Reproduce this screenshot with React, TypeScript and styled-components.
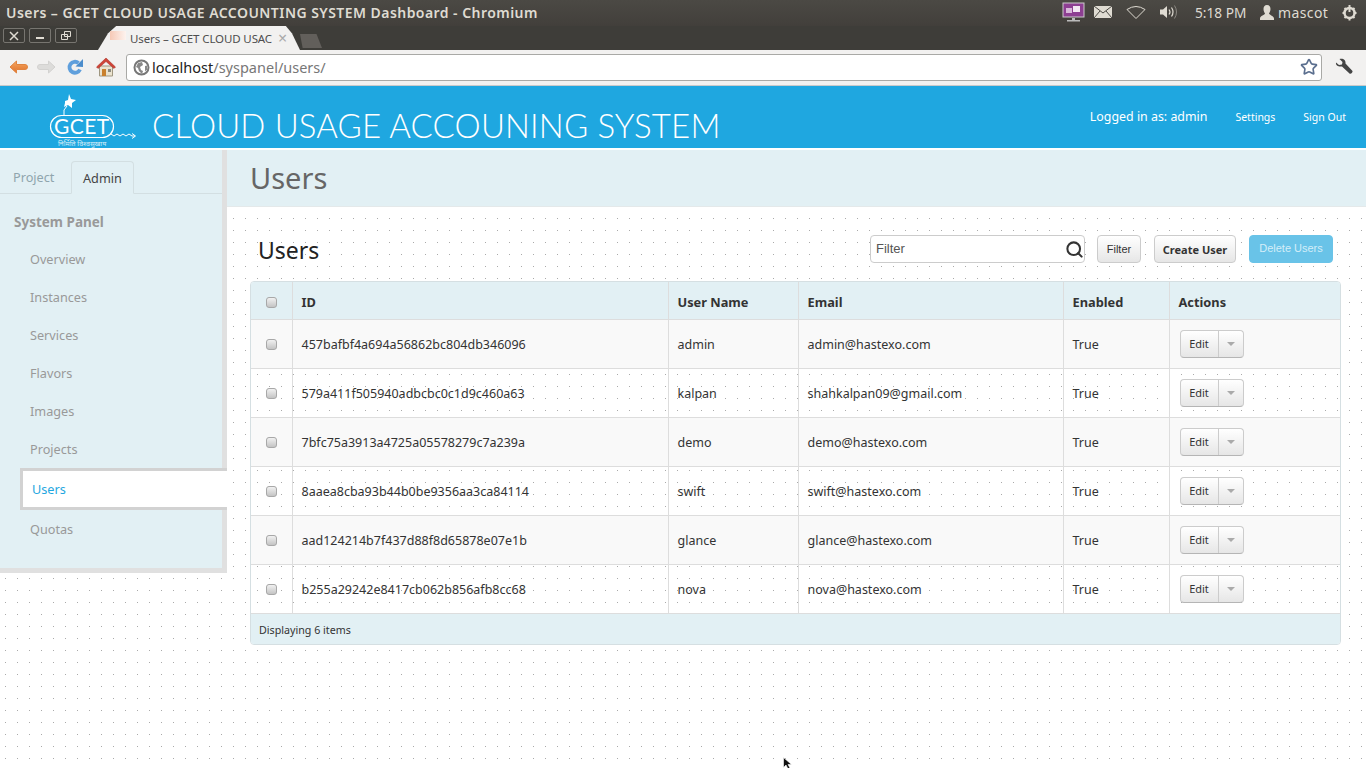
import type { FC } from 'react';
import { Search, Star } from 'lucide-react';
import styled, { createGlobalStyle } from 'styled-components';

const UI_FONT = '"Noto Sans", "Open Sans", sans-serif';

const users = [
  { id: '457bafbf4a694a56862bc804db346096', name: 'admin', email: 'admin@hastexo.com' },
  { id: '579a411f505940adbcbc0c1d9c460a63', name: 'kalpan', email: 'shahkalpan09@gmail.com' },
  { id: '7bfc75a3913a4725a05578279c7a239a', name: 'demo', email: 'demo@hastexo.com' },
  { id: '8aaea8cba93b44b0be9356aa3ca84114', name: 'swift', email: 'swift@hastexo.com' },
  { id: 'aad124214b7f437d88f8d65878e07e1b', name: 'glance', email: 'glance@hastexo.com' },
  { id: 'b255a29242e8417cb062b856afb8cc68', name: 'nova', email: 'nova@hastexo.com' },
];

const navItems = ['Overview', 'Instances', 'Services', 'Flavors', 'Images', 'Projects', 'Users', 'Quotas'];

const GlobalStyle = createGlobalStyle`
  html, body {
    margin: 0;
    height: 768px;
    overflow: hidden;
    background: #fff;
    font-family: ${UI_FONT};
  }
  * { box-sizing: border-box; }
`;

const StatusIcons: FC = () => (
  <StatusGroup>
    <ScreenIcon width="24" height="22" viewBox="0 0 24 22">
      <rect x="1" y="2" width="21" height="14" fill="#8d3f92" stroke="#ccc" />
      <rect x="4" y="7" width="6" height="5" fill="#d8b8da" />
      <rect x="11" y="5" width="7" height="6" fill="#f3e8f3" />
      <rect x="10" y="17" width="3" height="2" fill="#bbb" />
      <rect x="5" y="19" width="13" height="1.5" fill="#bbb" />
    </ScreenIcon>
    <svg width="20" height="14" viewBox="0 0 20 14">
      <rect x="1" y="1" width="18" height="12" fill="#dfdbd2" />
      <path d="M1 1l9 7 9-7M1 13l6-7M19 13l-6-7" fill="none" stroke="#4a4843" />
    </svg>
    <svg width="20" height="14" viewBox="0 0 20 14">
      <path d="M1 4.500Q10-1.500 19 4.500L10 13.500Z" fill="none" stroke="#dfdbd2" />
    </svg>
    <svg width="20" height="16" viewBox="0 0 20 16">
      <path d="M1 5.500h3L8 2v12L4 10.500H1Z" fill="#dfdbd2" />
      <path d="M10 5.500q2 2.500 0 5M12.500 3.500q3 4.500 0 9" fill="none" stroke="#dfdbd2" strokeWidth="1.200" />
      <path d="M15.500 1.500q4 6.500 0 13" fill="none" stroke="#8b8882" />
    </svg>
  </StatusGroup>
);

const WindowButton: FC<{ kind: 'close' | 'min' | 'max' }> = ({ kind }) => (
  <WinBtn>
    <svg width="12" height="10" viewBox="0 0 12 10">
      {kind === 'close' && <path d="M2 1l8 8M10 1l-8 8" stroke="#dfdbd2" strokeWidth="1.500" />}
      {kind === 'min' && <path d="M2 7h8" stroke="#dfdbd2" strokeWidth="2" />}
      {kind === 'max' && (
        <path d="M4.500.500h6v5h-6zM1.500 3.500h6v5h-6z" fill="#3f3e3a" stroke="#dfdbd2" />
      )}
    </svg>
  </WinBtn>
);

const Logo: FC = () => (
  <LogoSvg width="92" height="62" viewBox="0 0 92 62">
    <path d="M17 15l3-1 1-6 2 5 5 1-4 3 0 5-4-3-4 2 1-4Z" fill="#fff" />
    <path d="M19 20l-3 4v5" fill="none" stroke="#fff" />
    <rect x="2.500" y="29.500" width="63" height="22" rx="11" fill="none" stroke="#fff" strokeWidth="1.200" />
    <LogoName x="6" y="48">GCET</LogoName>
    <path d="M63 48l3 2 3-2 3 2 3-2 3 2 3-2 3 2h3M84 47.500l3.500 2.500-3.500 2.500" fill="none" stroke="#fff" />
    <LogoMotto x="10" y="60">निर्मिति विश्वसुखाय</LogoMotto>
  </LogoSvg>
);

const Checkbox: FC = () => <Check />;

export default function App() {
  return (
    <>
      <GlobalStyle />
      <Screen>
        <TitleBar>
          <WindowTitle>Users – GCET CLOUD USAGE ACCOUNTING SYSTEM Dashboard - Chromium</WindowTitle>
          <StatusIcons />
          <Clock>5:18 PM</Clock>
          <svg width="14" height="15" viewBox="0 0 14 15">
            <path d="M7 0c2.500 0 3.500 2 3.500 4S9.500 8 9 8.500c0 1.500 5 2 5 5V15H0v-1.500c0-3 5-3.500 5-5C4.500 8 3.500 6 3.500 4S4.500 0 7 0Z" fill="#dfdbd2" />
          </svg>
          <UserName>mascot</UserName>
          <svg width="17" height="17" viewBox="0 0 17 17">
            <circle cx="8.500" cy="9" r="5" fill="none" stroke="#dfdbd2" strokeWidth="2.500" />
            <path d="M8.500 1v7" stroke="#dfdbd2" strokeWidth="2" />
            <path d="M1.500 9h2M13.500 9h2M3.500 14l1.500-1.500M13.500 14L12 12.500M3.500 4L5 5.500M13.500 4L12 5.500M8.500 14.500v2" stroke="#dfdbd2" strokeWidth="2" />
          </svg>
        </TitleBar>
        <TabStrip>
          <WindowButtons>
            <WindowButton kind="close" />
            <WindowButton kind="min" />
            <WindowButton kind="max" />
          </WindowButtons>
          <BrowserTab>
            <Favicon />
            <TabLabel>Users – GCET CLOUD USAC</TabLabel>
            <TabClose>×</TabClose>
          </BrowserTab>
          <NewTab />
        </TabStrip>
        <Toolbar>
          <NavIcons>
            <svg width="20" height="16" viewBox="0 0 20 16">
              <defs>
                <linearGradient id="backFill" x1="0" y1="0" x2="0" y2="1">
                  <stop offset="0" stopColor="#f4a65f" />
                  <stop offset="1" stopColor="#e0702a" />
                </linearGradient>
              </defs>
              <path d="M8.500 2L2 8l6.500 6v-3.500H17a1.500 1.500 0 0 0 0-5H8.500Z" fill="url(#backFill)" stroke="#e0843f" strokeLinejoin="round" />
            </svg>
            <svg width="20" height="16" viewBox="0 0 20 16">
              <path d="M11.500 2L18 8l-6.500 6v-3.500H3a1.500 1.500 0 0 1 0-5h8.500Z" fill="#dddcda" stroke="#d3d2d0" strokeLinejoin="round" />
            </svg>
            <svg width="18" height="18" viewBox="0 0 18 18">
              <path d="M14 11.500A5.500 5.500 0 1 1 12.500 5" fill="none" stroke="#5f9fdc" strokeWidth="3.800" />
              <path d="M9.500 8.500L17 9V1Z" fill="#4c8dcc" />
            </svg>
            <HomeIcon width="20" height="20" viewBox="0 0 20 20">
              <path d="M3.500 9h13v10h-13Z" fill="#ebe3cf" stroke="#9f9680" />
              <path d="M6 12h4v7H6Z" fill="#c9802e" />
              <path d="M12 12h3v3h-3Z" fill="#8a8a80" />
              <path d="M10 1L.5 10l1.500 1.500L10 4.500l8 7 1.500-1.500Z" fill="#cf4437" stroke="#a52b20" strokeWidth=".5" />
            </HomeIcon>
          </NavIcons>
          <UrlBox>
            <svg width="17" height="17" viewBox="0 0 17 17">
              <circle cx="8.500" cy="8.500" r="7" fill="#fff" stroke="#777" strokeWidth="2" />
              <path d="M5 4l4-1 1 3-3 2 1 3 2 1-1 3-3-3-1-3-2-1Z" fill="#888" />
              <path d="M12 7l2-.5 0 4-2 2Z" fill="#888" />
            </svg>
            <UrlText>
              <UrlHost>localhost</UrlHost>/syspanel/users/
            </UrlText>
            <StarIcon size={18} strokeWidth={2.200} />
          </UrlBox>
          <svg width="18" height="18" viewBox="0 0 18 18">
            <path d="M1 4.500L4 7l3-.5.500-2.500-3-3C8 0 11 2 10.500 5.500l7 7.500c.5 1-1.500 3.500-3 2.500l-7.500-7C3.500 9 .5 7.500 1 4.500Z" fill="#444" />
          </svg>
        </Toolbar>
        <Masthead>
          <Logo />
          <BrandTitle>CLOUD USAGE ACCOUNING SYSTEM</BrandTitle>
          <LoggedIn>Logged in as: admin</LoggedIn>
          <TopLink>Settings</TopLink>
          <TopLink>Sign Out</TopLink>
        </Masthead>
        <Main>
          <Sidebar>
            <PanelTabs>
              <PanelTab>Project</PanelTab>
              <PanelTab $active>Admin</PanelTab>
            </PanelTabs>
            <PanelHeading>System Panel</PanelHeading>
            <NavList>
              {navItems.map(item => (
                <NavItem key={item} $active={item === 'Users'}>
                  {item}
                </NavItem>
              ))}
            </NavList>
          </Sidebar>
          <Content>
            <PageHeader>
              <PageTitle>Users</PageTitle>
            </PageHeader>
            <TableArea>
              <TableActions>
                <TableTitle>Users</TableTitle>
                <FilterBox>
                  <FilterText>Filter</FilterText>
                  <Search size={19} strokeWidth={2.600} color="#333" />
                </FilterBox>
                <PlainButton>Filter</PlainButton>
                <CreateButton>Create User</CreateButton>
                <DeleteButton>Delete Users</DeleteButton>
              </TableActions>
              <TableCard>
                <UsersTable>
                  <colgroup>
                    <col width="41" />
                    <col width="376" />
                    <col width="130" />
                    <col width="265" />
                    <col width="106" />
                    <col />
                  </colgroup>
                  <thead>
                    <tr>
                      <HeadCell $center>
                        <Checkbox />
                      </HeadCell>
                      <HeadCell>ID</HeadCell>
                      <HeadCell>User Name</HeadCell>
                      <HeadCell>Email</HeadCell>
                      <HeadCell>Enabled</HeadCell>
                      <HeadCell>Actions</HeadCell>
                    </tr>
                  </thead>
                  <tbody>
                    {users.map((user, index) => (
                      <BodyRow key={user.id} $odd={index % 2 === 0}>
                        <BodyCell $center>
                          <Checkbox />
                        </BodyCell>
                        <BodyCell>{user.id}</BodyCell>
                        <BodyCell>{user.name}</BodyCell>
                        <BodyCell>{user.email}</BodyCell>
                        <BodyCell>True</BodyCell>
                        <BodyCell>
                          <EditGroup>
                            <EditLabel>Edit</EditLabel>
                            <EditCaret>
                              <Caret />
                            </EditCaret>
                          </EditGroup>
                        </BodyCell>
                      </BodyRow>
                    ))}
                  </tbody>
                </UsersTable>
                <TableFooter>Displaying 6 items</TableFooter>
              </TableCard>
            </TableArea>
          </Content>
        </Main>
        <Pointer width="10" height="12" viewBox="0 0 10 12">
          <path d="M.5.500v10l2.500-2.500 2 4 2-1-2-3.500h3.500Z" fill="#111" stroke="#fff" strokeWidth=".6" />
        </Pointer>
      </Screen>
    </>
  );
}

const Screen = styled.div`
  position: relative;
  width: 1366px;
  height: 768px;
  overflow: hidden;
  display: flex;
  flex-direction: column;
`;

const TitleBar = styled.div`
  height: 26px;
  display: flex;
  align-items: center;
  padding: 0 8px 2px 6px;
  background: linear-gradient(#4b4944, #423f3b);
  color: #dfdbd2;
`;

const WindowTitle = styled.div`
  flex: 1;
  font-size: 14px;
  font-weight: 600;
  letter-spacing: 0.45px;
  white-space: nowrap;
`;

const StatusGroup = styled.div`
  display: flex;
  align-items: center;
  gap: 13px;
  margin-right: 15px;
`;

const ScreenIcon = styled.svg`
  margin-right: -6px;
`;

const Clock = styled.div`
  width: 65px;
  margin-left: 1px;
  font-size: 13.700px;
`;

const UserName = styled.div`
  width: 63px;
  margin-left: 4px;
  font-size: 14px;
  letter-spacing: 0.4px;
`;

const TabStrip = styled.div`
  height: 24px;
  display: flex;
  align-items: flex-end;
  background: #3e3d39;
`;

const WindowButtons = styled.div`
  display: flex;
  gap: 4px;
  align-self: flex-start;
  margin: 2px 0 0 3px;
`;

const WinBtn = styled.div`
  width: 22px;
  height: 15px;
  display: flex;
  align-items: center;
  justify-content: center;
  border: 1px solid #777570;
  border-radius: 2px;
  background: #3b3a36;
`;

const BrowserTab = styled.div`
  width: 202px;
  height: 24px;
  margin-left: 21px;
  padding: 0 0 0 12px;
  display: flex;
  align-items: center;
  background: #f2f1f0;
  clip-path: polygon(0 100%, 5% 30%, 9% 0, 93% 0, 96% 30%, 100% 100%);
`;

const Favicon = styled.span`
  width: 16px;
  height: 9px;
  flex: none;
  margin: -6px 0 0 0;
  background: linear-gradient(90deg, #f6c9b6, #fdf3ef);
`;

const TabLabel = styled.span`
  margin-left: 4px;
  white-space: nowrap;
  font-size: 11.500px;
  letter-spacing: -0.12px;
  color: #4e4e4e;
`;

const TabClose = styled.span`
  font-size: 16px;
  line-height: 1;
  color: #aaa;
  margin-left: 6px;
`;

const NewTab = styled.div`
  width: 22px;
  height: 14px;
  margin: 0 0 2px 0;
  background: #625f5b;
  clip-path: polygon(0 0, 75% 0, 100% 100%, 12% 100%);
`;

const Toolbar = styled.div`
  height: 36px;
  display: flex;
  align-items: center;
  padding: 0 12px 1px 8px;
  background: #f2f1f0;
  border-bottom: 1px solid #c9cacb;
`;

const NavIcons = styled.div`
  display: flex;
  align-items: center;
  gap: 9px;
  width: 118px;
`;

const HomeIcon = styled.svg`
  margin-left: 3px;
`;

const UrlBox = styled.div`
  width: 1196px;
  height: 27px;
  margin-right: 13px;
  padding: 0 3px 0 6px;
  display: flex;
  align-items: center;
  background: #fff;
  border: 1px solid #a9a9a6;
  border-radius: 3px;
`;

const UrlText = styled.div`
  flex: 1;
  margin-left: 2px;
  font-size: 14.500px;
  color: #777;
`;

const UrlHost = styled.span`
  color: #222;
`;

const StarIcon = styled(Star)`
  color: #5b6f8f;
`;

const Masthead = styled.header`
  height: 62px;
  display: flex;
  align-items: center;
  padding: 0 20px 0 48px;
  background: #1fa7e0;
  color: #fff;
`;

const LogoSvg = styled.svg`
  flex: none;
`;

const LogoName = styled.text`
  font-family: Lato, sans-serif;
  font-weight: 400;
  font-size: 21px;
  letter-spacing: 0.4px;
  fill: #fff;
`;

const LogoMotto = styled.text`
  font-family: "Noto Sans", sans-serif;
  font-size: 7px;
  fill: #d8eef8;
`;

const BrandTitle = styled.div`
  flex: 1;
  margin: 16px 0 0 12px;
  font-family: Lato, sans-serif;
  font-weight: 300;
  font-size: 33px;
  letter-spacing: 0.15px;
  white-space: nowrap;
`;

const LoggedIn = styled.div`
  font-size: 12.400px;
  margin-top: -2px;
`;

const TopLink = styled.div`
  margin-left: 28px;
  font-size: 10.500px;
`;

const Main = styled.div`
  flex: 1;
  display: flex;
  align-items: flex-start;
  margin-top: 2px;
  background-color: #fff;
  background-image: radial-gradient(circle at 0.5px 0.5px, #aaa 0.5px, transparent 1px);
  background-size: 12px 12px;
  background-position: 5px -148px;
`;

const Sidebar = styled.aside`
  width: 227px;
  height: 423px;
  flex: none;
  padding-top: 11px;
  background: #e2f0f4;
  border-right: 5px solid #e0e0e0;
  border-bottom: 5px solid #e0e0e0;
`;

const PanelTabs = styled.div`
  display: flex;
  align-items: flex-end;
  height: 33px;
  padding-left: 0;
  border-bottom: 1px solid #d3dfe2;
`;

const PanelTab = styled.div<{ $active?: boolean }>`
  width: ${({ $active }) => ($active ? '63px' : '71px')};
  height: ${({ $active }) => ($active ? '33px' : '32px')};
  margin-bottom: ${({ $active }) => ($active ? '-1px' : '0')};
  display: flex;
  align-items: center;
  padding-left: ${({ $active }) => ($active ? '11px' : '13px')};
  font-size: 12.700px;
  color: ${({ $active }) => ($active ? '#444' : '#8fa5ad')};
  border: ${({ $active }) => ($active ? '1px solid #d3dfe2' : 'none')};
  border-bottom: ${({ $active }) => ($active ? '1px solid #e2f0f4' : 'none')};
  border-radius: 4px 4px 0 0;
`;

const PanelHeading = styled.h4`
  margin: 18px 0 0 14px;
  height: 20px;
  font-size: 13.500px;
  line-height: 20px;
  font-weight: 700;
  color: #999;
`;

const NavList = styled.div`
  margin-top: 8px;
  display: flex;
  flex-direction: column;
`;

const NavItem = styled.div<{ $active?: boolean }>`
  display: flex;
  align-items: center;
  font-size: 12.700px;
  height: ${({ $active }) => ($active ? '42px' : '38px')};
  margin: ${({ $active }) => ($active ? '0 -5px 0 20px' : '0 0 0 30px')};
  padding-left: ${({ $active }) => ($active ? '9px' : '0')};
  color: ${({ $active }) => ($active ? '#1fa7e0' : '#999')};
  background: ${({ $active }) => ($active ? '#fff' : 'transparent')};
  border: ${({ $active }) => ($active ? '3px solid #d2d2d2' : 'none')};
  border-right: none;
`;

const Content = styled.main`
  flex: 1;
  min-width: 0;
`;

const PageHeader = styled.div`
  height: 57px;
  display: flex;
  align-items: center;
  padding: 0 0 2px 23px;
  background: #e2f0f4;
  border-bottom: 1px solid #e4e9ea;
`;

const PageTitle = styled.h1`
  margin: 0;
  font-size: 29px;
  font-weight: 400;
  color: #666;
`;

const TableArea = styled.div`
  padding: 28px 26px 0 23px;
`;

const TableActions = styled.div`
  height: 46px;
  display: flex;
  align-items: flex-start;
  padding: 0 7px 0 8px;
`;

const TableTitle = styled.h2`
  flex: 1;
  margin: 0;
  font-size: 23px;
  line-height: 30px;
  font-weight: 400;
  color: #222;
`;

const FilterBox = styled.div`
  width: 215px;
  height: 28px;
  display: flex;
  align-items: center;
  justify-content: space-between;
  padding: 0 0 0 5px;
  background: #fff;
  border: 1px solid #ccc;
  border-radius: 4px;
`;

const FilterText = styled.span`
  font-family: "Liberation Sans", sans-serif;
  font-size: 13px;
  margin-top: -2px;
  color: #555;
`;

const PlainButton = styled.div`
  width: 44px;
  height: 28px;
  margin-left: 12px;
  display: flex;
  align-items: center;
  justify-content: center;
  font-family: "Liberation Sans", sans-serif;
  font-size: 11px;
  color: #333;
  background: linear-gradient(#fff, #e6e6e6);
  border: 1px solid #ccc;
  border-radius: 4px;
`;

const CreateButton = styled(PlainButton)`
  width: 82px;
  margin-left: 13px;
  font-family: ${UI_FONT};
  font-weight: 700;
`;

const DeleteButton = styled(PlainButton)`
  width: 84px;
  margin-left: 13px;
  padding-bottom: 2px;
  color: #d4eef9;
  background: #69c3e8;
  border-color: #69c3e8;
`;

const TableCard = styled.div`
  width: 1091px;
  border: 1px solid #d5dfe2;
  border-radius: 4px;
  overflow: hidden;
`;

const UsersTable = styled.table`
  width: 100%;
  table-layout: fixed;
  border-collapse: collapse;
`;

const HeadCell = styled.th<{ $center?: boolean }>`
  height: 37px;
  padding: ${({ $center }) => ($center ? '2px 0 0 0' : '4px 0 0 9px')};
  text-align: ${({ $center }) => ($center ? 'center' : 'left')};
  font-size: 12.800px;
  font-weight: 700;
  color: #333;
  background: #e2f0f4;
  border-left: 1px solid #ddd;
  border-bottom: 1px solid #ddd;
  &:first-child { border-left: none; }
`;

const BodyRow = styled.tr<{ $odd: boolean }>`
  height: 49px;
  background: ${({ $odd }) => ($odd ? '#f9f9f9' : 'transparent')};
`;

const BodyCell = styled.td<{ $center?: boolean }>`
  padding: ${({ $center }) => ($center ? '0' : '2px 0 0 9px')};
  text-align: ${({ $center }) => ($center ? 'center' : 'left')};
  font-size: 12.500px;
  color: #333;
  border-left: 1px solid #ddd;
  border-top: 1px solid #ddd;
  &:first-child { border-left: none; }
`;

const Check = styled.span`
  display: inline-block;
  width: 11px;
  height: 11px;
  vertical-align: middle;
  background: linear-gradient(#f1f1f1, #c4c4c4);
  border: 1px solid #a8a8a8;
  border-radius: 3px;
`;

const EditGroup = styled.div`
  width: 64px;
  height: 28px;
  margin: -2px 0 0 1px;
  display: flex;
  background: linear-gradient(#fff, #e6e6e6);
  border: 1px solid #ccc;
  border-bottom-color: #b5b5b5;
  border-radius: 4px;
`;

const EditLabel = styled.div`
  width: 38px;
  display: flex;
  align-items: center;
  justify-content: center;
  font-size: 11px;
  color: #333;
  border-right: 1px solid #ccc;
`;

const EditCaret = styled.div`
  flex: 1;
  display: flex;
  align-items: center;
  justify-content: center;
`;

const Caret = styled.span`
  width: 0;
  height: 0;
  border-left: 4px solid transparent;
  border-right: 4px solid transparent;
  border-top: 4px solid #aaa;
`;

const TableFooter = styled.div`
  height: 31px;
  display: flex;
  align-items: center;
  padding: 2px 0 0 8px;
  font-size: 10.700px;
  color: #333;
  background: #e2f0f4;
  border-top: 1px solid #ddd;
`;

const Pointer = styled.svg`
  position: absolute;
  left: 783px;
  top: 757px;
`;
